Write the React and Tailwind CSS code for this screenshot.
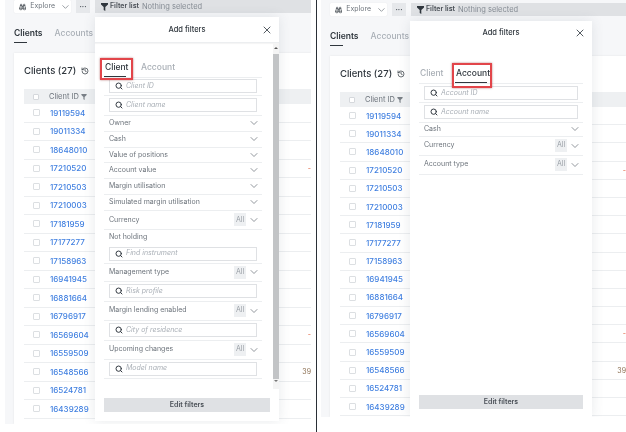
import React from "react";
import { Binoculars, ChevronDown, History, Search, X } from "lucide-react";

const CLIENT_IDS = [
  "19119594", "19011334", "18648010", "17210520", "17210503", "17210003",
  "17181959", "17177277", "17158963", "16941945", "16881664", "16796917",
  "16569604", "16559509", "16548566", "16524781", "16439289",
];

// h = row height in px, taken from the screenshot
const CLIENT_FILTERS = [
  { type: "input", label: "Client ID", h: "h-[18.5px]" },
  { type: "input", label: "Client name", h: "h-[19.5px]" },
  { label: "Owner", h: "h-[16px]" },
  { label: "Cash", h: "h-[16px]" },
  { label: "Value of positions", h: "h-[15.5px]" },
  { label: "Account value", h: "h-[15.5px]" },
  { label: "Margin utilisation", h: "h-[16px]" },
  { label: "Simulated margin utilisation", h: "h-[16px]" },
  { label: "Currency", all: true, h: "h-[19.5px]" },
  { type: "holding", label: "Find instrument", h: "h-[33.5px]" },
  { label: "Management type", all: true, h: "h-[18px]" },
  { type: "input", label: "Risk profile", h: "h-[20px]" },
  { label: "Margin lending enabled", all: true, h: "h-[19px]" },
  { type: "input", label: "City of residence", h: "h-[20px]" },
  { label: "Upcoming changes", all: true, h: "h-[19px]" },
  { type: "input", label: "Model name", h: "h-[19px]" },
];

const ACCOUNT_FILTERS = [
  { type: "input", label: "Account ID", h: "h-[19px]" },
  { type: "input", label: "Account name", h: "h-[19.5px]" },
  { label: "Cash", h: "h-[14px]" },
  { label: "Currency", all: true, h: "h-[19px]" },
  { label: "Account type", all: true, h: "h-[19px]" },
];

function FilterInput({ label }) {
  return (
    <div className="flex h-[14px] items-center gap-[3px] border border-[#dfe1e4] bg-white pl-[5px]">
      <Search size={8} strokeWidth={3} className="text-[#333a42]" />
      <span className="text-[7px] text-[#a9afb6] italic">{label}</span>
    </div>
  );
}

function FilterRow({ filter }) {
  if (filter.type === "input") {
    return (
      <div className={`flex flex-col justify-center border-b border-[#eceef0] px-[5px] ${filter.h}`}>
        <FilterInput label={filter.label} />
      </div>
    );
  }
  if (filter.type === "holding") {
    return (
      <div className={`flex flex-col justify-between border-b border-[#eceef0] px-[5px] pt-[2px] pb-[2px] ${filter.h}`}>
        <span className="text-[7px] leading-[10px] text-[#6d747c]">Not holding</span>
        <FilterInput label={filter.label} />
      </div>
    );
  }
  return (
    <div className={`flex items-center justify-between border-b border-[#eceef0] pr-[4px] pl-[5px] ${filter.h}`}>
      <span className="text-[7px] text-[#6d747c]">{filter.label}</span>
      <div className="flex items-center gap-[4px]">
        {filter.all && (
          <span className="flex h-[13px] w-[12px] items-center justify-center bg-[#eef0f2] text-[7px] text-[#9aa0a7]">All</span>
        )}
        <ChevronDown size={12} strokeWidth={1.5} className="-mx-[2px] text-[#6d747c]" />
      </div>
    </div>
  );
}

function Tab({ name, active, width, box }) {
  return (
    <div className={`relative flex flex-col items-start ${width}`}>
      <span className={`pl-px text-[8.5px] leading-[12px] font-medium ${active ? "text-[#2f363d]" : "text-[#a9afb6]"}`}>{name}</span>
      <span className={`mt-[3px] h-px w-full ${active ? "bg-[#2f363d]" : "bg-transparent"}`} />
      {active && <span className={`absolute border-2 border-[#e2454a] shadow-[0_0_2px_rgba(120,0,0,0.5)] ${box}`} />}
    </div>
  );
}

function AddFilters({ tab, filters, box, head, tabRow, list, scroll, title }) {
  return (
    <div className={`absolute z-10 flex flex-col bg-white shadow-[0_0_12px_rgba(60,70,90,0.12)] ${title}`}>
      <div className={`flex shrink-0 items-center justify-center ${head}`}>
        <span className="text-[7.5px] font-medium text-[#2f363d]">Add filters</span>
        <X size={12} strokeWidth={1.75} className="absolute right-[6px] text-[#3c434a]" />
      </div>
      <div className="relative flex flex-1 flex-col">
        <div className={`flex flex-col ${list}`}>
          <div className={`flex items-end gap-[14px] border-b border-[#eceef0] ${tabRow}`}>
            <Tab name="Client" active={tab === "client"} width="w-[22px]" box={box} />
            <Tab name="Account" active={tab === "account"} width="w-[32px]" box={box} />
          </div>
          {filters.map((filter) => (
            <FilterRow key={filter.label} filter={filter} />
          ))}
        </div>
        {scroll && (
          <div className="absolute top-0 right-0 flex h-[346px] w-[6px] flex-col items-center bg-[#f4f4f4]">
            <span className="mt-[4px] h-0 w-0 border-x-2 border-b-2 border-x-transparent border-b-[#555]" />
            <span className="mt-[5px] h-[325px] w-full bg-[#c2c4c6]" />
            <span className="mt-[1px] h-0 w-0 border-x-2 border-t-2 border-x-transparent border-t-[#777]" />
          </div>
        )}
      </div>
      <div className={`flex h-[14px] shrink-0 items-center justify-center bg-[#dfe1e4] text-[7px] font-semibold text-[#4a5057] ${scroll ? "mx-[9px] mb-[9px] w-[166px]" : "mx-[9px] mb-[8px] w-[164px]"}`}>
        Edit filters
      </div>
    </div>
  );
}

function Pane({ outer, pane, bar, rowH, headH, ticks, modal }) {
  return (
    <div className={outer}>
      <div className={`relative flex flex-col overflow-hidden bg-[#f6f7f9] ${pane}`}>
        <div className={`flex shrink-0 gap-[5px] pl-[9px] ${bar}`}>
          <div className="flex w-[57px] items-center gap-[4px] rounded-[1px] bg-white pl-[5px] shadow-[0_0_1px_rgba(0,0,0,0.15)]">
            <Binoculars size={8} strokeWidth={2.5} className="text-[#4a5057]" />
            <span className="text-[7px] text-[#6d747c]">Explore</span>
            <ChevronDown size={12} strokeWidth={1.5} className="ml-[1px] text-[#6d747c]" />
          </div>
          <div className="flex w-[14px] items-center justify-center bg-[#e6e8eb] text-[7px] leading-none font-bold text-[#3c434a]">···</div>
          <div className="flex flex-1 items-center gap-[2px] bg-[#dfe1e4] pl-[6px]">
            <svg width="7" height="8" viewBox="0 0 7 8" className="shrink-0">
              <path d="M0 0H7V1.4L4.3 4V8L2.7 7V4L0 1.4Z" fill="#2f363d" />
            </svg>
            <span className="text-[7px] font-semibold text-[#4a5057]">Filter list</span>
            <span className="ml-px text-[7.5px] text-[#858c94]">Nothing selected</span>
          </div>
        </div>

        <div className="mt-[14px] flex h-[26px] shrink-0 gap-[12px] pl-[9px]">
          <div className="flex flex-col">
            <span className="text-[8.5px] leading-[12px] font-semibold text-[#2f363d]">Clients</span>
            <span className="mt-[3px] h-px w-[13px] bg-[#2f363d]" />
          </div>
          <span className="text-[8.5px] leading-[12px] font-medium text-[#a9afb6]">Accounts</span>
        </div>

        <div className="ml-[9px] flex flex-1 flex-col bg-white pt-[10px] pl-[10px] shadow-[0_0_2px_rgba(0,0,0,0.08)]">
          <div className="flex h-[26px] shrink-0 items-start gap-[5px]">
            <span className="text-[9.5px] leading-[16px] font-medium text-[#2f363d]">Clients (27)</span>
            <History size={8} strokeWidth={2.25} className="mt-[4px] text-[#3c434a]" />
          </div>
          <div className={`flex shrink-0 items-center bg-[#eef0f2] ${headH}`}>
            <span className="ml-[9px] h-[6px] w-[6px] rounded-[1px] border border-[#d5d8dc] bg-white" />
            <span className="ml-[10px] text-[7.5px] text-[#6d747c]">Client ID</span>
            <svg width="6" height="6" viewBox="0 0 7 8" className="ml-[2px]">
              <path d="M0 0H7V1.4L4.3 4V8L2.7 7V4L0 1.4Z" fill="#7a8087" />
            </svg>
          </div>
          {CLIENT_IDS.map((id, i) => (
            <div key={id} className={`relative flex shrink-0 items-center border-b border-[#eceef0] ${rowH}`}>
              <span className="ml-[9px] h-[7px] w-[7px] rounded-[1px] border border-[#dcdfe2] bg-white" />
              <span className="ml-[10px] text-[8px] font-medium text-[#3f7fe0]">{id}</span>
              {ticks[i] && (
                <span className={`absolute right-0 top-[4px] text-[7px] ${ticks[i] === "39" ? "text-[#8a6d4f]" : "text-[#e0603c]"}`}>{ticks[i]}</span>
              )}
            </div>
          ))}
        </div>

        <AddFilters {...modal} />
      </div>
    </div>
  );
}

export default function App() {
  return (
    <div className="flex h-[432px] w-[626px] bg-white blur-[0.4px] [font-family:Inter,'Liberation_Sans',sans-serif]">
      <Pane
        outer="h-full w-[316px] shrink-0 px-[5px]"
        pane="h-[424px]"
        bar="h-[13px]"
        headH="h-[15px]"
        rowH="h-[18.5px]"
        ticks={{ 3: "-", 12: "-", 14: "39" }}
        modal={{
          tab: "client",
          filters: CLIENT_FILTERS,
          title: "top-[17px] left-[90px] h-[404px] w-[184px]",
          head: "h-[26px] border-b border-[#eceef0] shadow-[0_1px_1px_rgba(0,0,0,0.04)]",
          tabRow: "h-[34.5px]",
          list: "ml-[9px] w-[158px]",
          box: "-top-[3px] -right-[7px] -bottom-[3px] -left-[4px]",
          scroll: true,
        }}
      />
      <div className="h-full w-px shrink-0 bg-[#2a2f36]" />
      <Pane
        outer="h-full flex-1 pl-[4px]"
        pane="h-[417px]"
        bar="mt-[3px] h-[13px]"
        headH="h-[15px]"
        rowH="h-[18.2px]"
        ticks={{ 3: "-", 12: "-", 14: "39" }}
        modal={{
          tab: "account",
          filters: ACCOUNT_FILTERS,
          title: "top-[21px] left-[89px] h-[396px] w-[182px]",
          head: "h-[24px]",
          tabRow: "h-[39px]",
          list: "ml-[9px] w-[164px]",
          box: "-top-[4px] -right-[5px] -bottom-[5px] -left-[3px]",
          scroll: false,
        }}
      />
    </div>
  );
}
